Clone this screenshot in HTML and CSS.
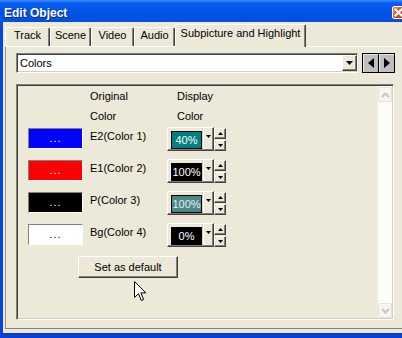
FILE: index.html
```html
<!DOCTYPE html>
<html>
<head>
<meta charset="utf-8">
<title>Edit Object</title>
<link rel="stylesheet" href="styles.css">
</head>
<body>
<div class="window">
  <div class="titlebar">
    <span class="title">Edit Object</span>
    <span class="close"><svg width="11" height="11" viewBox="0 0 11 11"><path d="M2.5 2.5 L8.5 8.5 M8.5 2.5 L2.5 8.5" stroke="#fff" stroke-width="2" stroke-linecap="square"/></svg></span>
  </div>
  <div class="frame">
    <div class="tabs">
      <div class="tab w-track">Track</div>
      <div class="tab w-scene">Scene</div>
      <div class="tab w-video">Video</div>
      <div class="tab w-audio">Audio</div>
      <div class="tab sel">Subpicture and Highlight</div>
    </div>
    <div class="panel">
      <div class="toprow">
        <div class="combo">
          <span class="combo-text">Colors</span>
          <span class="dropbtn"><svg width="7" height="4" viewBox="0 0 7 4"><path d="M0 0 H7 L3.5 4 Z" fill="#000"/></svg></span>
        </div>
        <div class="navbtns">
          <span class="nav"><svg width="6" height="10" viewBox="0 0 6 10"><path d="M6 0 V10 L0 5 Z" fill="#000"/></svg></span>
          <span class="nav"><svg width="6" height="10" viewBox="0 0 6 10"><path d="M0 0 V10 L6 5 Z" fill="#000"/></svg></span>
        </div>
      </div>
      <div class="listbox">
        <div class="list-content">
          <div class="hdr-row">
            <div></div>
            <div class="hdr">Original<br>Color</div>
            <div class="hdr hdr-display">Display<br>Color</div>
          </div>
          <div class="rows">
            <div class="swatch sw-blue">...</div>
            <div class="label">E2(Color 1)</div>
            <div class="dcombo"><span class="dbox db-teal">40%</span><span class="dsep"></span><span class="darrow"><svg width="5" height="3" viewBox="0 0 5 3"><path d="M0 0 H5 L2.5 3 Z" fill="#000"/></svg></span></div>
            <div class="spin"><span class="sbtn"><svg width="5" height="3" viewBox="0 0 5 3"><path d="M0 3 H5 L2.5 0 Z" fill="#000"/></svg></span><span class="sbtn"><svg width="5" height="3" viewBox="0 0 5 3"><path d="M0 0 H5 L2.5 3 Z" fill="#000"/></svg></span></div>

            <div class="swatch sw-red">...</div>
            <div class="label">E1(Color 2)</div>
            <div class="dcombo"><span class="dbox db-black">100%</span><span class="dsep"></span><span class="darrow"><svg width="5" height="3" viewBox="0 0 5 3"><path d="M0 0 H5 L2.5 3 Z" fill="#000"/></svg></span></div>
            <div class="spin"><span class="sbtn"><svg width="5" height="3" viewBox="0 0 5 3"><path d="M0 3 H5 L2.5 0 Z" fill="#000"/></svg></span><span class="sbtn"><svg width="5" height="3" viewBox="0 0 5 3"><path d="M0 0 H5 L2.5 3 Z" fill="#000"/></svg></span></div>

            <div class="swatch sw-black">...</div>
            <div class="label">P(Color 3)</div>
            <div class="dcombo"><span class="dbox db-gray">100%</span><span class="dsep"></span><span class="darrow"><svg width="5" height="3" viewBox="0 0 5 3"><path d="M0 0 H5 L2.5 3 Z" fill="#000"/></svg></span></div>
            <div class="spin"><span class="sbtn"><svg width="5" height="3" viewBox="0 0 5 3"><path d="M0 3 H5 L2.5 0 Z" fill="#000"/></svg></span><span class="sbtn"><svg width="5" height="3" viewBox="0 0 5 3"><path d="M0 0 H5 L2.5 3 Z" fill="#000"/></svg></span></div>

            <div class="swatch sw-white">...</div>
            <div class="label">Bg(Color 4)</div>
            <div class="dcombo"><span class="dbox db-black">0%</span><span class="dsep"></span><span class="darrow"><svg width="5" height="3" viewBox="0 0 5 3"><path d="M0 0 H5 L2.5 3 Z" fill="#000"/></svg></span></div>
            <div class="spin"><span class="sbtn"><svg width="5" height="3" viewBox="0 0 5 3"><path d="M0 3 H5 L2.5 0 Z" fill="#000"/></svg></span><span class="sbtn"><svg width="5" height="3" viewBox="0 0 5 3"><path d="M0 0 H5 L2.5 3 Z" fill="#000"/></svg></span></div>
          </div>
          <button class="default-btn" type="button">Set as default</button>
        </div>
        <div class="vscroll">
          <span class="sarrow"><svg width="9" height="6" viewBox="0 0 9 6"><path d="M1 5 L4.5 1.5 L8 5" fill="none" stroke="#C6C7BD" stroke-width="2"/></svg></span>
          <span class="sarrow"><svg width="9" height="6" viewBox="0 0 9 6"><path d="M1 1 L4.5 4.5 L8 1" fill="none" stroke="#C6C7BD" stroke-width="2"/></svg></span>
        </div>
      </div>
    </div>
  </div>
  <svg class="cursor" width="13" height="21" viewBox="0 0 13 21"><path d="M0.5 0.5 L0.5 16.5 L4.5 12.7 L7.3 19.5 L9.6 18.5 L6.9 11.9 L11.8 11.9 Z" fill="#fff" stroke="#000" stroke-width="1" stroke-linejoin="miter"/></svg>
</div>
</body>
</html>
```

FILE: styles.css
```css
* { box-sizing: border-box; }
html, body { margin: 0; padding: 0; }
body {
  width: 402px;
  height: 338px;
  overflow: hidden;
  background: #ECE9D8;
  font-family: "Liberation Sans", Arial, sans-serif;
  font-size: 11px;
  color: #000;
}
.window {
  position: relative;
  width: 420px;
  height: 339px;
  display: flex;
  flex-direction: column;
}
.titlebar {
  height: 22px;
  flex: none;
  display: flex;
  align-items: center;
  padding: 0 15px 0 4px;
  background: linear-gradient(#3D8DFF 0, #0A5EF2 3px, #0056E6 45%, #0050DE 100%);
}
.title {
  color: #fff;
  font-weight: bold;
  font-size: 12px;
  line-height: 14px;
  padding-top: 4px;
  text-shadow: 1px 1px 0 #0A2A90;
}
.close {
  margin-left: auto;
  margin-top: 2px;
  width: 13px;
  height: 13px;
  border: 1px solid #fff;
  border-radius: 2px;
  background: linear-gradient(135deg, #EA8E6E, #D4502A 55%, #C43C18);
  display: flex;
}
.frame {
  flex: 1;
  display: flex;
  flex-direction: column;
  border-left: 3px solid #0845DA;
  border-bottom: 6px solid #0A40D6;
  padding: 0 0 4px 2px;
  background: #ECE9D8;
}
.tabs {
  height: 24px;
  flex: none;
  display: flex;
  align-items: flex-end;
}
.tab {
  height: 19px;
  border-top: 1px solid #fff;
  border-left: 1px solid #fff;
  border-right: 1px solid #404040;
  box-shadow: inset -1px 0 #808080;
  border-radius: 2px 2px 0 0;
  text-align: center;
  line-height: 15px;
  white-space: nowrap;
  background: #ECE9D8;
}
.w-track { width: 45px; }
.w-scene { width: 41px; }
.w-video { width: 43px; }
.w-audio { width: 41px; }
.tab.sel {
  width: 131px;
  height: 23px;
  margin-bottom: -1px;
  padding-top: 1px;
  position: relative;
  z-index: 1;
}
.panel {
  flex: 1;
  border-top: 1px solid #fff;
  border-left: 1px solid #9A9A92;
  border-bottom: 1px solid #808080;
  padding: 6px 0 0 10px;
}
.toprow {
  display: flex;
  gap: 4px;
  height: 20px;
}
.combo {
  width: 342px;
  height: 20px;
  display: flex;
  background: #fff;
  border: 1px solid;
  border-color: #808080 #fff #fff #808080;
  box-shadow: inset 1px 1px #404040, inset -1px -1px #D4D0C8;
}
.combo-text {
  flex: 1;
  padding: 1px 0 0 3px;
  line-height: 16px;
}
.dropbtn {
  width: 15px;
  height: 16px;
  margin: 1px 0;
  background: #ECE9D8;
  border: 1px solid;
  border-color: #fff #404040 #404040 #fff;
  box-shadow: inset -1px -1px #808080;
  display: flex;
  align-items: center;
  justify-content: center;
}
.navbtns { display: flex; }
.nav {
  width: 17px;
  height: 20px;
  background: #BEBEBE;
  border: 1px solid #000;
  box-shadow: inset 1px 1px #E4E4E4;
  display: flex;
  align-items: center;
  justify-content: center;
}
.nav + .nav { margin-left: -1px; }
.listbox {
  margin-top: 11px;
  width: 378px;
  height: 236px;
  display: flex;
  padding: 1px;
  border: 1px solid;
  border-color: #808080 #fff #fff #808080;
  box-shadow: inset 1px 1px #404040, inset -1px -1px #D4D0C8;
}
.list-content {
  flex: 1;
  padding-left: 10px;
}
.hdr-row {
  display: grid;
  grid-template-columns: 62px 77px 59px;
  height: 41px;
  line-height: 20px;
}
.hdr-display { padding-left: 10px; }
.rows {
  display: grid;
  grid-template-columns: 62px 77px 47px 12px;
  grid-auto-rows: 24px;
  row-gap: 8px;
}
.swatch {
  width: 55px;
  height: 21px;
  margin-top: 1px;
  border: 1px solid;
  border-color: #808080 #fff #fff #808080;
  color: #fff;
  text-align: center;
  line-height: 18px;
  letter-spacing: 1px;
}
.sw-blue { background: #0000FF; }
.sw-red { background: #FF0000; }
.sw-black { background: #000; }
.sw-white { background: #fff; color: #000; }
.label {
  padding-top: 1px;
  line-height: 16px;
  white-space: nowrap;
}
.dcombo {
  height: 24px;
  display: flex;
  align-items: flex-start;
  padding-left: 3px;
  border: 1px solid;
  border-color: #fff #404040 #404040 #fff;
  box-shadow: inset -1px -1px #808080;
}
.dbox {
  margin-top: 3px;
  width: 31px;
  height: 18px;
  border: 1px solid #000;
  color: #fff;
  text-align: center;
  line-height: 17px;
  white-space: nowrap;
  overflow: hidden;
}
.db-teal { background: #008080; }
.db-black { background: #000; }
.db-gray { background: #4A8787; color: #E4F2F2; }
.dsep {
  width: 1px;
  height: 21px;
  margin-left: 1px;
  background: #fff;
  box-shadow: -1px 0 #D4D0C8;
}
.darrow {
  flex: 1;
  display: flex;
  justify-content: center;
  padding-top: 7px;
}
.spin {
  margin-top: 1px;
  display: flex;
  flex-direction: column;
  gap: 1px;
}
.sbtn {
  width: 12px;
  height: 11px;
  border: 1px solid;
  border-color: #fff #404040 #404040 #fff;
  box-shadow: inset -1px -1px #808080;
  display: flex;
  align-items: center;
  justify-content: center;
}
.default-btn {
  display: block;
  margin: 9px 0 0 50px;
  width: 100px;
  height: 22px;
  padding: 0;
  font: inherit;
  color: #000;
  line-height: 20px;
  text-align: center;
  background: #ECE9D8;
  border: 1px solid;
  border-color: #fff #404040 #404040 #fff;
  box-shadow: inset -1px -1px #808080;
  border-radius: 0;
}
.vscroll {
  width: 15px;
  display: flex;
  flex-direction: column;
  justify-content: space-between;
  padding: 1px 0 0 0;
  background: #FCFCF9;
  border-left: 1px solid #F1F0E8;
}
.sarrow {
  width: 14px;
  height: 15px;
  border: 1px solid #E4E2D6;
  border-radius: 2px;
  background: #F6F5EF;
  display: flex;
  align-items: center;
  justify-content: center;
}
.cursor {
  position: absolute;
  left: 134px;
  top: 281px;
}
```
